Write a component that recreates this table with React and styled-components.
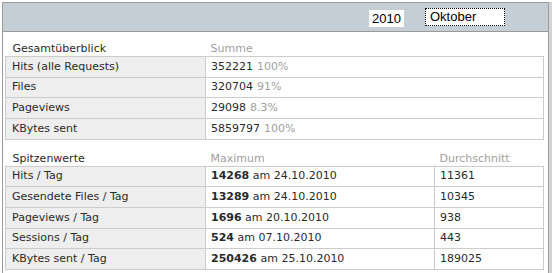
import React from "react";
import styled, { createGlobalStyle } from "styled-components";

const GlobalStyle = createGlobalStyle`
  html, body {
    margin: 0;
    height: 100%;
    overflow: hidden;
  }
  body {
    background: #ffffff;
    font-family: "DejaVu Sans", Verdana, sans-serif;
    font-size: 11px;
    color: #2a2a2a;
  }
`;

const Frame = styled.div`
  box-sizing: border-box;
  margin: 2px 0 0 2px;
  width: 547px;
  height: calc(100vh - 2px);
  border: 1px solid #9a9a9a;
  border-bottom: none;
  box-shadow: 3px 0 0 #d4d4d4;
`;

const Toolbar = styled.div`
  height: 28px;
  background: #c5cdd5;
  border-bottom: 1px solid #9a9a9a;
  display: flex;
  justify-content: flex-end;
  align-items: center;
  gap: 21px;
  padding-right: 43px;
  font-family: "Liberation Sans", Arial, sans-serif;
  font-size: 13px;
  color: #000000;
`;

const Field = styled.div`
  box-sizing: border-box;
  height: ${p => p.$h}px;
  width: ${p => p.$w}px;
  background: #ffffff;
  border: 1px ${p => (p.$focus ? "dotted #000000" : "solid #ffffff")};
  padding-left: ${p => (p.$focus ? 4 : 2)}px;
  line-height: ${p => p.$h - 2}px;
  margin-top: ${p => (p.$focus ? 0 : 2)}px;
`;

const Content = styled.div`
  padding: 8px 4px 0 2px;
`;

const Table = styled.table`
  width: 539px;
  border-collapse: collapse;
  margin-bottom: 10px;
  table-layout: fixed;
`;

const HeadCell = styled.td`
  height: 16px;
  padding: 0 0 0 ${p => (p.$first ? 7 : 5)}px;
  vertical-align: bottom;
  line-height: 15px;
  color: ${p => (p.$first ? "#2a2a2a" : "#a0a0a0")};
`;

const Cell = styled.td`
  height: 19.67px;
  padding: 0 0 0 ${p => (p.$label ? 6 : 5)}px;
  border: 1px solid #cccccc;
  background: ${p => (p.$label ? "#eeeeee" : "#ffffff")};
  white-space: nowrap;
  line-height: 14px;
`;

const Muted = styled.span`
  color: #a0a0a0;
  margin-left: 4px;
`;

const Strong = styled.b`
  font-weight: bold;
`;

const overview = [
  ["Hits (alle Requests)", "352221", "100%"],
  ["Files", "320704", "91%"],
  ["Pageviews", "29098", "8.3%"],
  ["KBytes sent", "5859797", "100%"],
];

const peaks = [
  ["Hits / Tag", "14268", "24.10.2010", "11361"],
  ["Gesendete Files / Tag", "13289", "24.10.2010", "10345"],
  ["Pageviews / Tag", "1696", "20.10.2010", "938"],
  ["Sessions / Tag", "524", "07.10.2010", "443"],
  ["KBytes sent / Tag", "250426", "25.10.2010", "189025"],
];

export default function App() {
  return (
    <>
      <GlobalStyle />
      <Frame>
        <Toolbar>
          <Field $w={35} $h={17}>2010</Field>
          <Field $w={80} $h={18} $focus>Oktober</Field>
        </Toolbar>
        <Content>
          <Table>
            <colgroup>
              <col style={{ width: 200 }} />
              <col />
            </colgroup>
            <tbody>
              <tr>
                <HeadCell $first>Gesamtüberblick</HeadCell>
                <HeadCell>Summe</HeadCell>
              </tr>
              {overview.map(([label, value, pct]) => (
                <tr key={label}>
                  <Cell $label>{label}</Cell>
                  <Cell>
                    {value}
                    <Muted>{pct}</Muted>
                  </Cell>
                </tr>
              ))}
            </tbody>
          </Table>
          <Table>
            <colgroup>
              <col style={{ width: 200 }} />
              <col style={{ width: 229 }} />
              <col />
            </colgroup>
            <tbody>
              <tr>
                <HeadCell $first>Spitzenwerte</HeadCell>
                <HeadCell>Maximum</HeadCell>
                <HeadCell>Durchschnitt</HeadCell>
              </tr>
              {peaks.map(([label, max, date, avg]) => (
                <tr key={label}>
                  <Cell $label>{label}</Cell>
                  <Cell>
                    <Strong>{max}</Strong> am {date}
                  </Cell>
                  <Cell>{avg}</Cell>
                </tr>
              ))}
            </tbody>
          </Table>
        </Content>
      </Frame>
    </>
  );
}
